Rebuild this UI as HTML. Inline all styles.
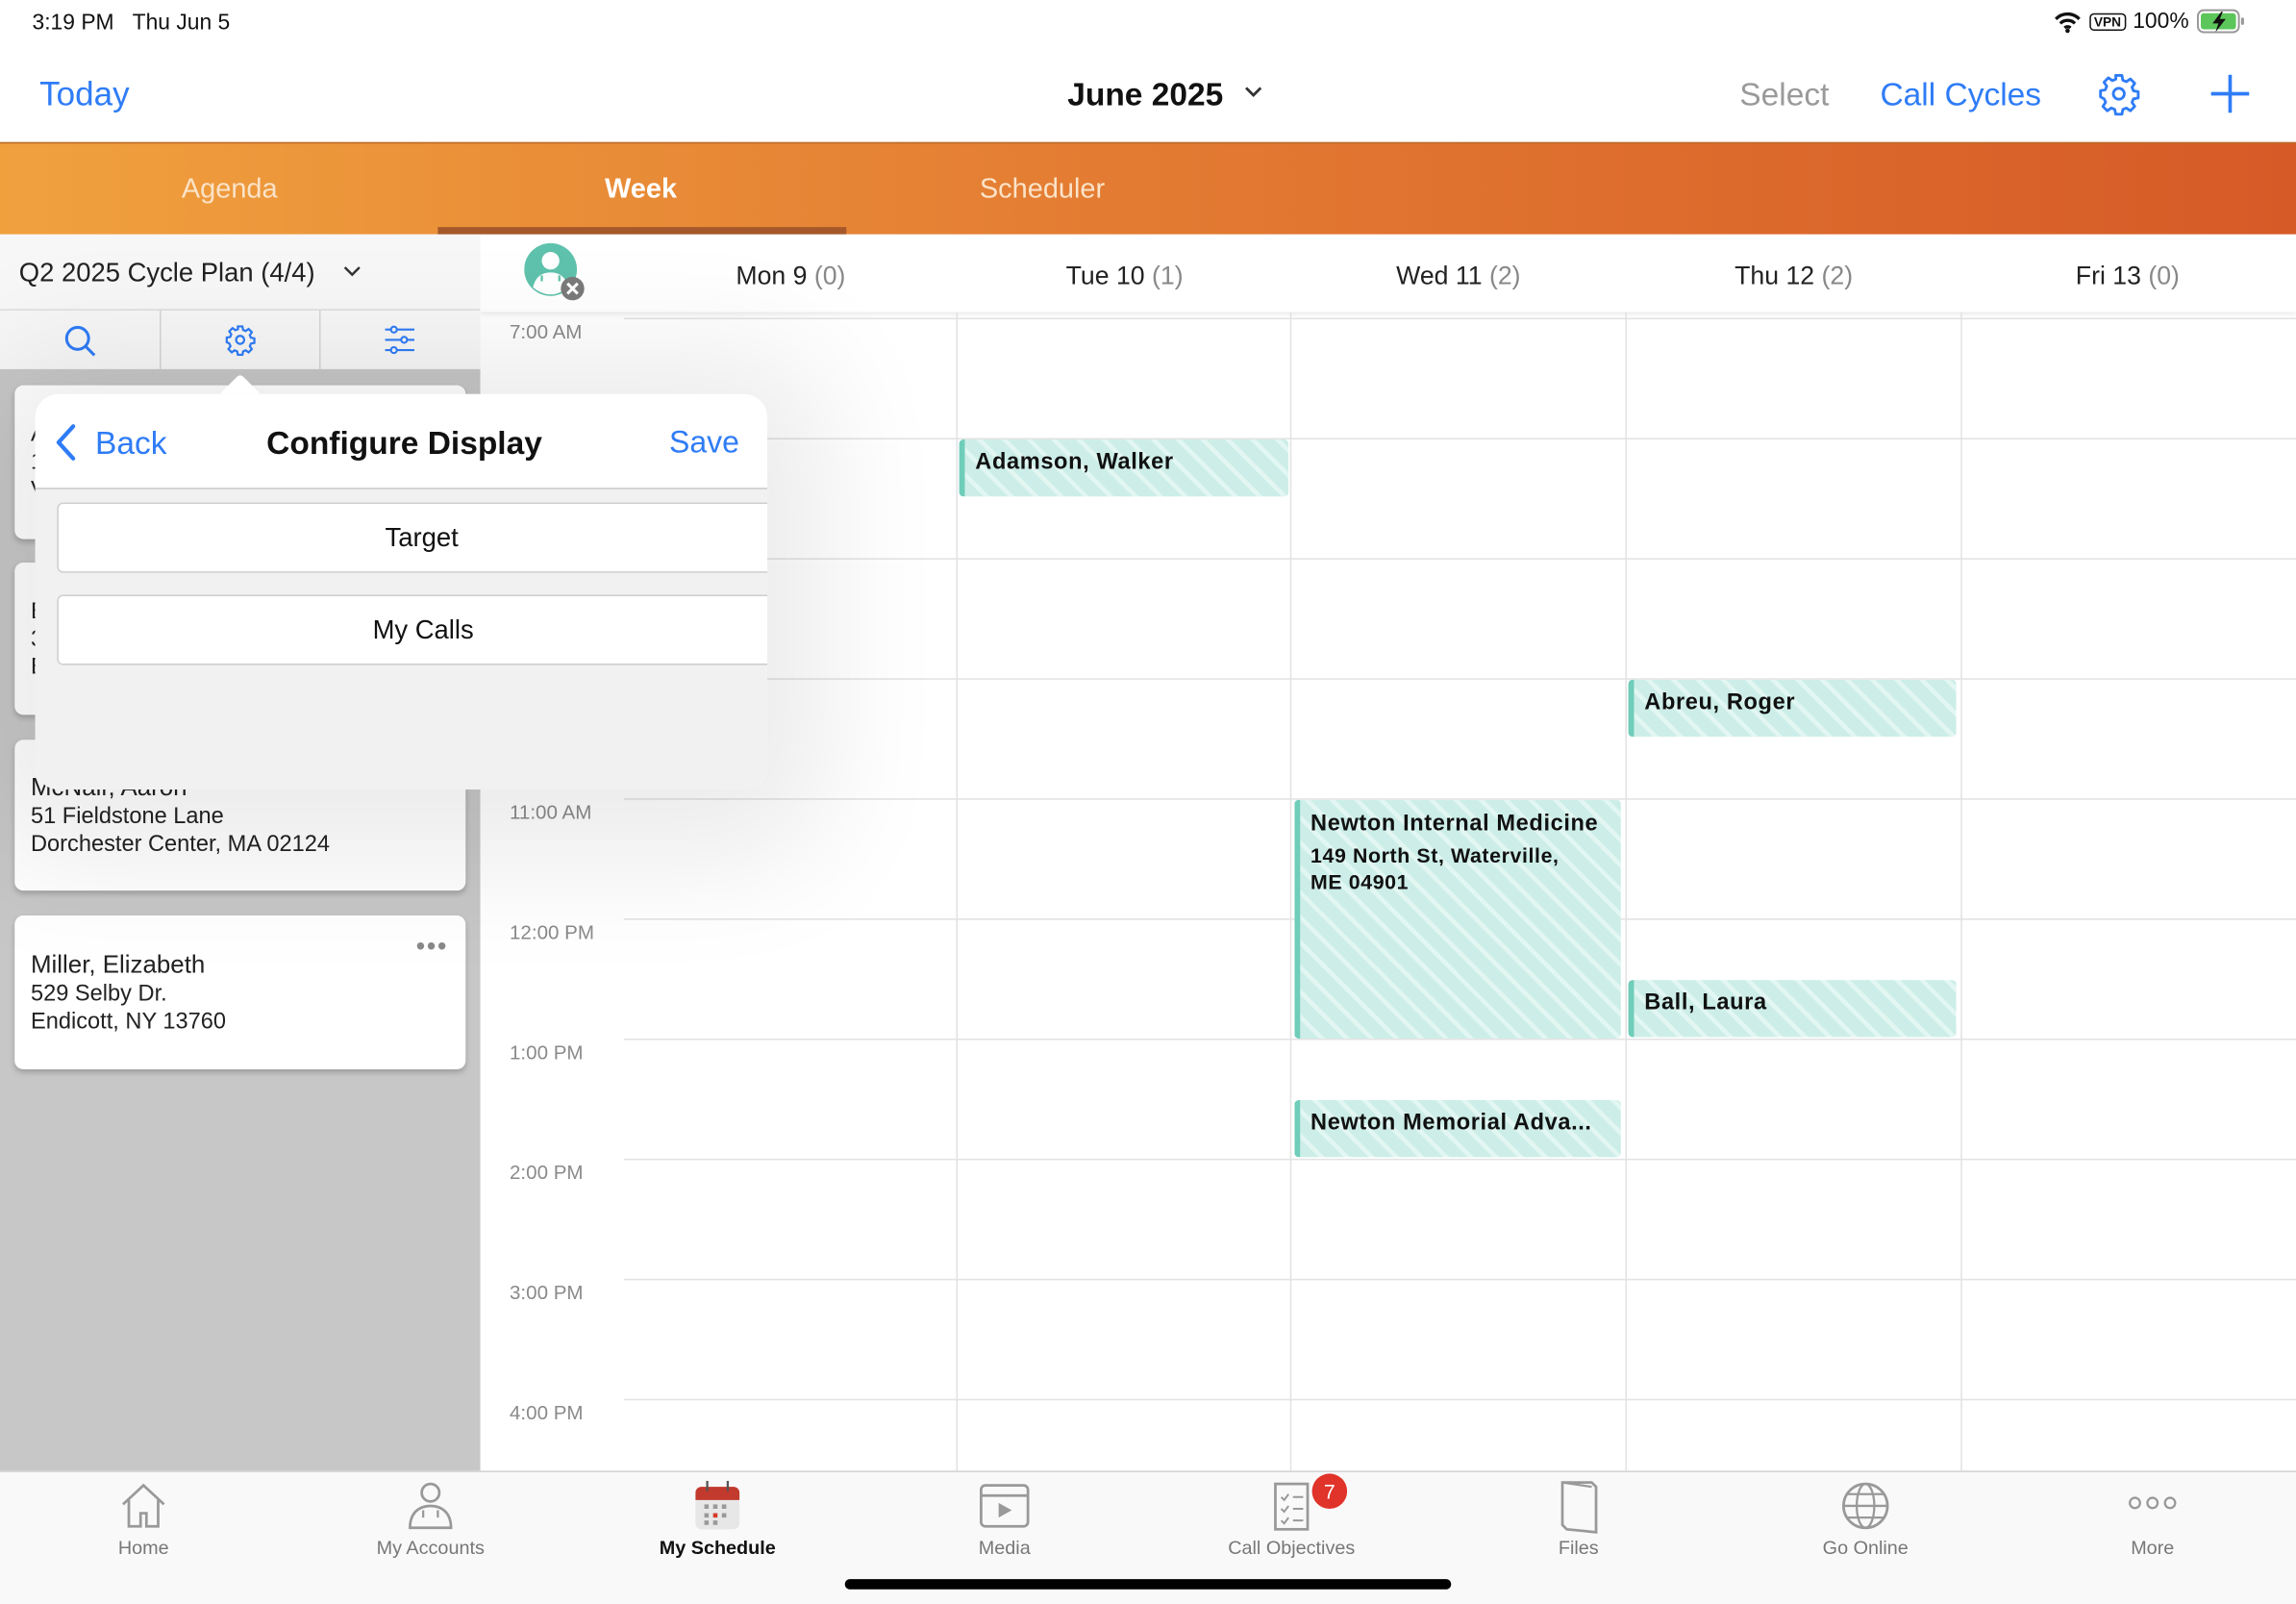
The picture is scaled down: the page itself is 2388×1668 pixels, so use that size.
<!DOCTYPE html>
<html><head><meta charset="utf-8">
<style>
*{box-sizing:border-box;margin:0;padding:0}
html,body{width:2388px;height:1668px;overflow:hidden;background:#fff}
#s{position:absolute;left:0;top:0;width:1568px;height:1095px;transform:scale(1.52296,1.52329);transform-origin:0 0;font-family:"Liberation Sans",sans-serif;background:#fff;overflow:hidden}
.a{position:absolute}
.blue{color:#2f7cf6}
.hl{position:absolute;left:426px;right:0;height:1px;background:#e2e2e2}
.vl{position:absolute;top:213px;bottom:91px;width:1px;background:#e2e2e2}
.tl{position:absolute;left:348px;font-size:13.5px;color:#8a8a8a}
.ev{position:absolute;border-radius:3px;border-left:4px solid #6fcdb9;background:repeating-linear-gradient(45deg,#cdeee8 0 9px,#e2f6f2 9px 12px);font-weight:bold;font-size:15.5px;letter-spacing:.4px;color:#111;padding:7px 0 0 7px;overflow:hidden;white-space:nowrap}
.dh{position:absolute;top:178px;font-size:17.5px;color:#222;transform:translateX(-50%);white-space:nowrap}
.dh span{color:#888}
.card{position:absolute;left:10px;width:308px;background:#fff;border-radius:6px;box-shadow:0 2px 4px rgba(0,0,0,.2);padding:0 11px;font-size:15.5px;color:#222;line-height:19px}
.tab{position:absolute;top:1049px;font-size:13px;color:#777;transform:translateX(-50%);white-space:nowrap}
.ic{position:absolute;top:1010px;transform:translateX(-50%)}
</style></head><body><div id="s">
<div class="a" style="left:22px;top:7px;font-size:15px;color:#111">3:19 PM&nbsp;&nbsp;&nbsp;Thu Jun 5</div>
<div class="a" style="left:1402px;top:6px;font-size:15px;color:#111;display:flex;align-items:center;gap:5px">
<svg width="20" height="16" viewBox="0 0 20 16"><path d="M2 6a11 11 0 0 1 16 0M5 9a7 7 0 0 1 10 0M8 12a3 3 0 0 1 4 0" stroke="#111" stroke-width="2.2" fill="none"/><circle cx="10" cy="14" r="1.5" fill="#111"/></svg>
<span style="border:1.3px solid #111;border-radius:3px;font-size:9px;padding:0 2px;font-weight:bold">VPN</span>
<span>100%</span>
<svg width="34" height="17" viewBox="0 0 34 17"><rect x="1" y="1" width="28" height="15" rx="4" fill="none" stroke="#999" stroke-width="1.3"/><rect x="3" y="3" width="24" height="11" rx="2" fill="#5cc65a"/><rect x="30.5" y="6" width="2" height="5" rx="1" fill="#999"/><path d="M17 2 11 10h4l-2 6 7-9h-4l2-5z" fill="#111"/></svg></div>
<div class="a blue" style="left:27px;top:51px;font-size:23px">Today</div>
<div class="a" style="left:729px;top:52px;font-size:22px;font-weight:bold;color:#111">June 2025</div>
<svg class="a" style="left:849px;top:58px" width="14" height="10" viewBox="0 0 14 10"><path d="M2 2l5 5 5-5" stroke="#333" stroke-width="1.8" fill="none"/></svg>
<div class="a" style="left:1188px;top:52px;font-size:22px;color:#9a9a9a">Select</div>
<div class="a blue" style="left:1284px;top:52px;font-size:22px">Call Cycles</div>
<svg class="a" style="left:1432px;top:49px" width="30" height="30" viewBox="0 0 24 24"><path d="M10.3 2h3.4l.5 2.6 1.9.8 2.2-1.5 2.4 2.4-1.5 2.2.8 1.9 2.6.5v3.4l-2.6.5-.8 1.9 1.5 2.2-2.4 2.4-2.2-1.5-1.9.8-.5 2.6h-3.4l-.5-2.6-1.9-.8-2.2 1.5-2.4-2.4 1.5-2.2-.8-1.9L2 13.7v-3.4l2.6-.5.8-1.9-1.5-2.2 2.4-2.4 2.2 1.5 1.9-.8z" fill="none" stroke="#2f7cf6" stroke-width="1.5" stroke-linejoin="round"/><circle cx="12" cy="12" r="3" fill="none" stroke="#2f7cf6" stroke-width="1.5"/></svg>
<svg class="a" style="left:1508px;top:49px" width="30" height="30" viewBox="0 0 30 30"><path d="M15 2v26M2 15h26" stroke="#2f7cf6" stroke-width="2.4"/></svg>
<div class="a" style="left:0;top:97px;width:1568px;height:63px;background:linear-gradient(90deg,#f0a13e,#e47e33 45%,#d65a27)"></div>
<div class="a" style="left:0;top:97px;width:1568px;height:1px;background:#b86a2a"></div>
<div class="a" style="left:124px;top:119px;font-size:19px;color:#fbe3c8">Agenda</div>
<div class="a" style="left:413px;top:119px;font-size:19px;color:#fff;font-weight:bold">Week</div>
<div class="a" style="left:669px;top:119px;font-size:19px;color:#fbe3c8">Scheduler</div>
<div class="a" style="left:299px;top:155px;width:279px;height:5px;background:#a5592a"></div>
<div class="a" style="left:328px;top:160px;width:1240px;height:53px;background:#fff;box-shadow:0 2px 3px rgba(0,0,0,.08)"></div>
<svg class="a" style="left:358px;top:166px" width="42" height="40" viewBox="0 0 42 40"><circle cx="18" cy="18" r="18" fill="#5fc2ac"/><circle cx="18" cy="12" r="6" fill="#fff"/><path d="M6 30c2-8 7-10 12-10s10 2 12 10c-3 3-8 5-12 5s-9-2-12-5z" fill="#fff"/><path d="M12 22v4m12-4v4" stroke="#5fc2ac" stroke-width="1.5"/><circle cx="33" cy="31" r="8" fill="#7a7a7a"/><path d="M29.5 27.5l7 7m0-7-7 7" stroke="#fff" stroke-width="2"/></svg>
<div class="dh" style="left:540px">Mon 9 <span>(0)</span></div>
<div class="dh" style="left:768px">Tue 10 <span>(1)</span></div>
<div class="dh" style="left:996px">Wed 11 <span>(2)</span></div>
<div class="dh" style="left:1225px">Thu 12 <span>(2)</span></div>
<div class="dh" style="left:1453px">Fri 13 <span>(0)</span></div>
<div class="hl" style="top:217px"></div><div class="hl" style="top:299px"></div><div class="hl" style="top:381px"></div><div class="hl" style="top:463px"></div><div class="hl" style="top:545px"></div><div class="hl" style="top:627px"></div><div class="hl" style="top:709px"></div><div class="hl" style="top:791px"></div><div class="hl" style="top:873px"></div><div class="hl" style="top:955px"></div>
<div class="vl" style="left:653px"></div><div class="vl" style="left:881px"></div><div class="vl" style="left:1110px"></div><div class="vl" style="left:1339px"></div>
<div class="tl" style="top:219px">7:00 AM</div>
<div class="tl" style="top:547px">11:00 AM</div>
<div class="tl" style="top:629px">12:00 PM</div>
<div class="tl" style="top:711px">1:00 PM</div>
<div class="tl" style="top:793px">2:00 PM</div>
<div class="tl" style="top:875px">3:00 PM</div>
<div class="tl" style="top:957px">4:00 PM</div>
<div class="ev" style="left:655px;top:300px;width:225px;height:39px">Adamson, Walker</div>
<div class="ev" style="left:1112px;top:464px;width:224px;height:39px">Abreu, Roger</div>
<div class="ev" style="left:884px;top:546px;width:223px;height:163px;line-height:19px">Newton Internal Medicine<br><span style="font-size:14px;line-height:18px;display:block;margin-top:3px">149 North St, Waterville,<br>ME 04901</span></div>
<div class="ev" style="left:1112px;top:669px;width:224px;height:39px">Ball, Laura</div>
<div class="ev" style="left:884px;top:751px;width:223px;height:39px">Newton Memorial Adva...</div>
<div class="a" style="left:0;top:160px;width:328px;height:52px;background:#f7f7f7;border-bottom:1px solid #ddd"></div>
<div class="a" style="left:13px;top:176px;font-size:18px;color:#222">Q2 2025 Cycle Plan (4/4)</div>
<svg class="a" style="left:234px;top:181px" width="13" height="9" viewBox="0 0 13 9"><path d="M1.5 1.5l5 5 5-5" stroke="#333" stroke-width="1.6" fill="none"/></svg>
<div class="a" style="left:0;top:212px;width:328px;height:40px;background:#f7f7f7"></div>
<div class="a" style="left:109px;top:212px;width:1px;height:40px;background:#d6d6d6"></div>
<div class="a" style="left:218px;top:212px;width:1px;height:40px;background:#d6d6d6"></div>
<svg class="a" style="left:43px;top:221px" width="24" height="24" viewBox="0 0 24 24"><circle cx="10" cy="10" r="7.5" fill="none" stroke="#2f7cf6" stroke-width="2"/><path d="M15.5 15.5l6 6" stroke="#2f7cf6" stroke-width="2"/></svg>
<svg class="a" style="left:153px;top:221px" width="22" height="22" viewBox="0 0 24 24"><path d="M10.3 2h3.4l.5 2.6 1.9.8 2.2-1.5 2.4 2.4-1.5 2.2.8 1.9 2.6.5v3.4l-2.6.5-.8 1.9 1.5 2.2-2.4 2.4-2.2-1.5-1.9.8-.5 2.6h-3.4l-.5-2.6-1.9-.8-2.2 1.5-2.4-2.4 1.5-2.2-.8-1.9L2 13.7v-3.4l2.6-.5.8-1.9-1.5-2.2 2.4-2.4 2.2 1.5 1.9-.8z" fill="none" stroke="#2f7cf6" stroke-width="1.6"/><circle cx="12" cy="12" r="3" fill="none" stroke="#2f7cf6" stroke-width="1.6"/></svg>
<svg class="a" style="left:262px;top:222px" width="22" height="20" viewBox="0 0 22 20"><path d="M1 3h20M1 10h20M1 17h20" stroke="#2f7cf6" stroke-width="1.4"/><circle cx="7" cy="3" r="2" fill="#f7f7f7" stroke="#2f7cf6" stroke-width="1.4"/><circle cx="14" cy="10" r="2" fill="#f7f7f7" stroke="#2f7cf6" stroke-width="1.4"/><circle cx="7" cy="17" r="2" fill="#f7f7f7" stroke="#2f7cf6" stroke-width="1.4"/></svg>
<div class="a" style="left:0;top:252px;width:328px;height:752px;background:#c7c7c7"></div>
<div class="card" style="top:263px;height:105px;padding-top:24px">A<br>1<br>V</div>
<div class="card" style="top:384px;height:104px;padding-top:24px">B<br>3<br>E</div>
<div class="card" style="top:505px;height:103px;padding-top:23px"><span style="font-size:17px">McNair, Aaron</span><br>51 Fieldstone Lane<br>Dorchester Center, MA 02124</div>
<div class="card" style="top:625px;height:105px;padding-top:24px"><span style="font-size:17px">Miller, Elizabeth</span><br>529 Selby Dr.<br>Endicott, NY 13760<div style="position:absolute;right:12px;top:16px;font-size:18px;color:#888;letter-spacing:1px;line-height:10px">•••</div></div>
<div class="a" style="left:24px;top:269px;width:500px;height:270px;border-radius:16px;box-shadow:0 10px 120px 40px rgba(0,0,0,.08)"></div>
<div class="a" style="left:145px;top:250px;width:38px;height:24px;overflow:hidden"><div style="position:absolute;left:7px;top:10px;width:24px;height:24px;background:#fff;transform:rotate(45deg);border-radius:3px"></div></div>
<div class="a" style="left:24px;top:269px;width:500px;height:270px;border-radius:16px;background:#f1f1f1;overflow:hidden">
 <div style="position:absolute;left:0;top:0;width:500px;height:65px;background:#fff;border-bottom:1px solid #c9c9c9"></div>
 <svg style="position:absolute;left:13px;top:20px" width="16" height="26" viewBox="0 0 16 26"><path d="M13 2 3 13l10 11" stroke="#2f7cf6" stroke-width="2.8" fill="none" stroke-linecap="round" stroke-linejoin="round"/></svg>
 <div class="blue" style="position:absolute;left:41px;top:21px;font-size:22px">Back</div>
 <div style="position:absolute;left:158px;top:21px;font-size:22px;font-weight:bold;color:#111">Configure Display</div>
 <div class="blue" style="position:absolute;left:433px;top:22px;font-size:21px">Save</div>
 <div style="position:absolute;left:15px;top:74px;width:500px;height:48px;background:#fff;border:1px solid #cfcfcf;border-radius:4px;line-height:46px;font-size:18px;color:#111"><span style="position:absolute;left:248px;transform:translateX(-50%)">Target</span></div>
 <div style="position:absolute;left:15px;top:137px;width:500px;height:48px;background:#fff;border:1px solid #cfcfcf;border-radius:4px;line-height:46px;font-size:18px;color:#111"><span style="position:absolute;left:249px;transform:translateX(-50%);white-space:nowrap">My Calls</span></div>
</div>
<div class="a" style="left:0;top:1004px;width:1568px;height:91px;background:#f9f9f9;border-top:1.5px solid #d2d2d2"></div>
<svg class="ic" style="left:98px" width="36" height="36" viewBox="0 0 36 36"><path d="M4 17 18 4l14 13M8 14v18h8v-9h4v9h8V14" fill="none" stroke="#999" stroke-width="1.8"/></svg>
<svg class="ic" style="left:294px" width="36" height="36" viewBox="0 0 36 36"><circle cx="18" cy="9" r="6" fill="none" stroke="#999" stroke-width="1.8"/><path d="M4 33c0-10 6-15 14-15s14 5 14 15z" fill="none" stroke="#999" stroke-width="1.8"/><path d="M13 21v5m10-5v5" stroke="#999" stroke-width="1.5"/></svg>
<svg class="ic" style="left:490px" width="36" height="36" viewBox="0 0 36 36"><rect x="3" y="5" width="30" height="29" rx="4" fill="#e7e7e7"/><path d="M3 9a4 4 0 0 1 4-4h22a4 4 0 0 1 4 4v5H3z" fill="#c2392d"/><path d="M11 1v7M25 1v7" stroke="#555" stroke-width="1.5"/><g fill="#999"><rect x="9" y="17" width="3" height="3"/><rect x="15" y="17" width="3" height="3"/><rect x="21" y="17" width="3" height="3"/><rect x="9" y="23" width="3" height="3"/><rect x="21" y="23" width="3" height="3"/><rect x="9" y="28" width="3" height="3"/><rect x="15" y="28" width="3" height="3"/></g><rect x="15" y="23" width="3" height="3" fill="#d63a2c"/></svg>
<svg class="ic" style="left:686px" width="36" height="36" viewBox="0 0 36 36"><rect x="2" y="4" width="32" height="28" rx="3" fill="none" stroke="#999" stroke-width="1.8"/><path d="M2 11h32" stroke="#999" stroke-width="1.8"/><path d="M14 16v10l9-5z" fill="#999"/></svg>
<svg class="ic" style="left:882px" width="36" height="36" viewBox="0 0 36 36"><rect x="7" y="3" width="22" height="31" fill="none" stroke="#999" stroke-width="1.8"/><path d="M11 12l2 2 3-4M11 20l2 2 3-4M11 28l2 2 3-4M19 12h7M19 20h7M19 28h7" stroke="#999" stroke-width="1.3" fill="none"/></svg>
<div class="a" style="left:896px;top:1006px;width:24px;height:24px;border-radius:12px;background:#e0332a;color:#fff;font-size:14px;text-align:center;line-height:24px">7</div>
<svg class="ic" style="left:1078px" width="36" height="38" viewBox="0 0 36 38"><path d="M7 2h20l3 3v31L10 34 7 31z" fill="none" stroke="#999" stroke-width="1.8"/><path d="M7 2l20 3" stroke="#999" stroke-width="1.5"/></svg>
<svg class="ic" style="left:1274px" width="36" height="36" viewBox="0 0 36 36"><circle cx="18" cy="18" r="15" fill="none" stroke="#999" stroke-width="1.8"/><ellipse cx="18" cy="18" rx="6" ry="15" fill="none" stroke="#999" stroke-width="1.5"/><path d="M3 18h30M6 10h24M6 26h24" stroke="#999" stroke-width="1.5"/></svg>
<svg class="ic" style="left:1470px;top:1020px" width="34" height="12" viewBox="0 0 34 12"><circle cx="5" cy="6" r="3.5" fill="none" stroke="#999" stroke-width="1.5"/><circle cx="17" cy="6" r="3.5" fill="none" stroke="#999" stroke-width="1.5"/><circle cx="29" cy="6" r="3.5" fill="none" stroke="#999" stroke-width="1.5"/></svg>
<div class="tab" style="left:98px">Home</div>
<div class="tab" style="left:294px">My Accounts</div>
<div class="tab" style="left:490px;color:#111;font-weight:bold">My Schedule</div>
<div class="tab" style="left:686px">Media</div>
<div class="tab" style="left:882px">Call Objectives</div>
<div class="tab" style="left:1078px">Files</div>
<div class="tab" style="left:1274px">Go Online</div>
<div class="tab" style="left:1470px">More</div>
<div class="a" style="left:577px;top:1078px;width:414px;height:7px;border-radius:4px;background:#000"></div>
</div></body></html>
